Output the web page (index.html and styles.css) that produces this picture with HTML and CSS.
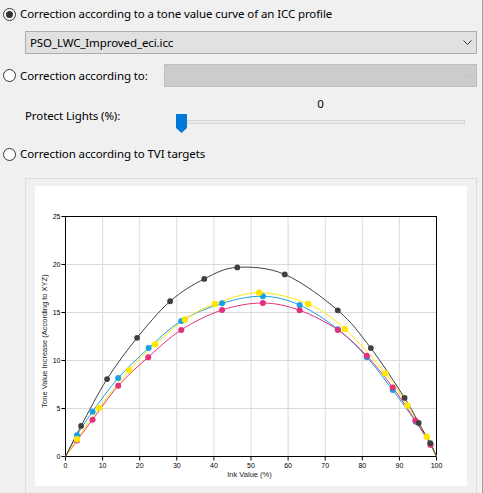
FILE: index.html
```html
<!DOCTYPE html>
<html lang="en">
  <head>
    <meta charset="UTF-8" />
    <meta name="viewport" content="width=device-width, initial-scale=1.0" />
    <title>Tone Value Correction</title>
    <link rel="stylesheet" href="styles.css">
  </head>
  <body>
    <div class="panel">
      <label class="option">
        <span class="radio checked"></span>
        <span>Correction according to a tone value curve of an ICC profile</span>
      </label>
      <div class="combo profile">
        <span>PSO_LWC_Improved_eci.icc</span>
        <svg class="chevron" width="9" height="5" viewBox="0 0 9 5">
          <path d="M0.5 0.5 L4.5 4.5 L8.5 0.5" />
        </svg>
      </div>

      <div class="option-row">
        <label class="option">
          <span class="radio"></span>
          <span>Correction according to:</span>
        </label>
        <div class="combo disabled">
          <span></span>
          <svg class="chevron" width="9" height="5" viewBox="0 0 9 5">
            <path d="M0.5 0.5 L4.5 4.5 L8.5 0.5" />
          </svg>
        </div>
      </div>

      <div class="protect">
        <span class="protect-label">Protect Lights (%):</span>
        <div class="slider">
          <div class="slider-value">0</div>
          <div class="slider-body">
            <div class="track"></div>
            <svg class="thumb" width="11" height="19" viewBox="0 0 11 19">
              <polygon points="0,0 11,0 11,14 5.5,19 0,14" />
            </svg>
          </div>
        </div>
      </div>

      <label class="option tvi">
        <span class="radio"></span>
        <span>Correction according to TVI targets</span>
      </label>

      <div class="chart-box">
        <div class="chart">
          <svg id="tvi" width="432" height="300" viewBox="0 0 432 300"></svg>
        </div>
      </div>
    </div>

    <script src="chart.js"></script>
  </body>
</html>
```

FILE: styles.css
```css
html,
body {
  overflow: hidden;
}
body {
  margin: 0;
  background: #f0f0f0;
  font-family: "Noto Sans", sans-serif;
  font-size: 11.5px;
  letter-spacing: -0.1px;
  color: #000;
}
.panel {
  box-sizing: border-box;
  width: 483px;
  min-height: 493px;
  padding: 6px 5px 0 3px;
  border-right: 1px solid #a0a0a0;
}
.option {
  display: flex;
  align-items: center;
  height: 16px;
  line-height: 16px;
  white-space: nowrap;
}
.radio {
  box-sizing: border-box;
  width: 13px;
  height: 13px;
  margin-right: 4px;
  border: 1px solid #333;
  border-radius: 50%;
  background: #fff;
  display: flex;
  align-items: center;
  justify-content: center;
}
.radio.checked::after {
  content: "";
  width: 7px;
  height: 7px;
  border-radius: 50%;
  background: #333;
}
.combo {
  box-sizing: border-box;
  height: 23px;
  padding: 0 4px 0 4px;
  border: 1px solid #adadad;
  background: #e1e1e1;
  display: flex;
  align-items: center;
  justify-content: space-between;
}
.chevron path {
  fill: none;
  stroke: #333;
  stroke-width: 1;
}
.profile {
  margin: 9px 0 0 22px;
}
.option-row {
  display: flex;
  align-items: center;
  justify-content: space-between;
  margin-top: 10px;
}
.combo.disabled {
  width: 313px;
  border-color: #bfbfbf;
  background: #cccccc;
}
.combo.disabled .chevron path {
  stroke: #bfbfbf;
}
.protect {
  display: flex;
  margin-top: 9px;
}
.protect-label {
  margin-left: 22px;
  padding-top: 12px;
  line-height: 16px;
}
.slider {
  width: 289px;
  margin-left: auto;
  margin-right: 12px;
}
.slider-value {
  height: 16px;
  line-height: 16px;
  text-align: center;
}
.slider-body {
  position: relative;
  box-sizing: border-box;
  height: 19px;
  margin-top: 2px;
  padding-top: 6px;
}
.track {
  box-sizing: border-box;
  height: 4px;
  border: 1px solid #d6d6d6;
  background: #e7eaea;
}
.thumb {
  position: absolute;
  left: 0;
  top: 0;
  fill: #0078d7;
}
.tvi {
  margin-top: 13px;
}
.chart-box {
  margin: 16px 0 0 22px;
  padding: 7px 9px;
  border: 1px solid #dcdcdc;
}
.chart {
  width: 432px;
  height: 300px;
  background: #fff;
}
.chart svg {
  display: block;
  font-family: "Liberation Sans", Arial, sans-serif;
  letter-spacing: 0;
}
```

FILE: chart.js
```js
let svg = document.getElementById("tvi");
const NS = "http://www.w3.org/2000/svg";

// plot frame inside the white area
const plotLeft = 30.5, plotRight = 401.5, plotTop = 30.5, plotBottom = 270.5;

function px(t) {
  return plotLeft + ((plotRight - plotLeft) * t) / 100;
}
function py(v) {
  return plotBottom - ((plotBottom - plotTop) * v) / 25;
}

function add(tag, attrs, text) {
  let el = document.createElementNS(NS, tag);
  for (let key in attrs) el.setAttribute(key, attrs[key]);
  if (text !== undefined) el.textContent = text;
  svg.append(el);
  return el;
}

// grid
for (let t = 10; t < 100; t += 10) {
  add("line", { x1: px(t), y1: plotTop, x2: px(t), y2: plotBottom, stroke: "#dadada" });
}
for (let v = 5; v < 25; v += 5) {
  add("line", { x1: plotLeft, y1: py(v), x2: plotRight, y2: py(v), stroke: "#dadada" });
}

// axes labels and ticks
for (let v = 0; v <= 25; v += 5) {
  add("line", { x1: plotLeft - 4, y1: py(v), x2: plotLeft, y2: py(v), stroke: "#000" });
  add("text", { x: plotLeft - 5, y: py(v) + 2.5, "font-size": 7, "text-anchor": "end" }, v);
}
for (let t = 0; t <= 100; t += 10) {
  add("line", { x1: px(t), y1: plotBottom, x2: px(t), y2: plotBottom + 4, stroke: "#000" });
  add("text", { x: px(t), y: plotBottom + 11, "font-size": 7, "text-anchor": "middle" }, t);
}
add("text", { x: 214.5, y: 291, "font-size": 7.5, "text-anchor": "middle", fill: "#222" }, "Ink Value (%)");
add(
  "text",
  { transform: "translate(11.5 155) rotate(-90)", "font-size": 7.5, "text-anchor": "middle", fill: "#222" },
  "Tone Value Increase (According to XYZ)"
);

add("rect", {
  x: plotLeft,
  y: plotTop,
  width: plotRight - plotLeft,
  height: plotBottom - plotTop,
  fill: "none",
  stroke: "#000",
});

let series = [
  {
    color: "#18a2e4",
    r: 3,
    points: [[3.1, 2.22], [7.3, 4.67], [14.2, 8.17], [22.4, 11.29], [31.2, 14.12], [42.2, 15.96], [53.2, 16.69],
      [63.1, 15.78], [73.4, 13.26], [81.2, 10.35], [88.2, 6.92], [94.4, 3.63], [98.4, 1.32]],
  },
  {
    color: "#e5307c",
    r: 3,
    points: [[3.1, 1.66], [7.3, 3.84], [14.2, 7.37], [22.3, 10.35], [31.2, 13.19], [42.2, 15.26], [53.2, 15.99],
      [63.1, 15.23], [73.4, 13.19], [81.2, 10.49], [88.2, 7.2], [94.3, 3.74], [98.4, 1.21]],
  },
  {
    color: "#ffe600",
    r: 3.2,
    points: [[3.1, 1.8], [9.1, 5.06], [17.1, 9.0], [24.2, 11.7], [32.2, 14.27], [40.3, 15.89], [52.2, 17.07],
      [65.4, 15.89], [75.3, 13.29], [86.2, 8.66], [92.2, 5.3], [97.4, 2.05]],
  },
  {
    color: "#404040",
    r: 2.9,
    points: [[4.2, 3.18], [11.2, 8.07], [19.3, 12.36], [28.2, 16.17], [37.4, 18.5], [46.3, 19.7], [59.1, 18.97],
      [73.4, 15.23], [82.3, 11.29], [91.4, 6.1], [95.2, 3.5], [98.3, 1.39]],
  },
];

function smooth(pts) {
  let d = "M" + pts[0][0] + " " + pts[0][1];
  for (let i = 0; i < pts.length - 1; i++) {
    let p0 = pts[i - 1] || pts[i];
    let p1 = pts[i];
    let p2 = pts[i + 1];
    let p3 = pts[i + 2] || p2;
    let c1x = p1[0] + (p2[0] - p0[0]) / 6;
    let c1y = p1[1] + (p2[1] - p0[1]) / 6;
    let c2x = p2[0] - (p3[0] - p1[0]) / 6;
    let c2y = p2[1] - (p3[1] - p1[1]) / 6;
    d += " C" + c1x + " " + c1y + " " + c2x + " " + c2y + " " + p2[0] + " " + p2[1];
  }
  return d;
}

for (let s of series) {
  let pts = [[0, 0]].concat(s.points, [[100, 0]]).map((p) => [px(p[0]), py(p[1])]);
  add("path", { d: smooth(pts), fill: "none", stroke: s.color, "stroke-width": 1 });
}
for (let s of series) {
  for (let p of s.points) {
    add("circle", { cx: px(p[0]), cy: py(p[1]), r: s.r, fill: s.color });
  }
}
```
